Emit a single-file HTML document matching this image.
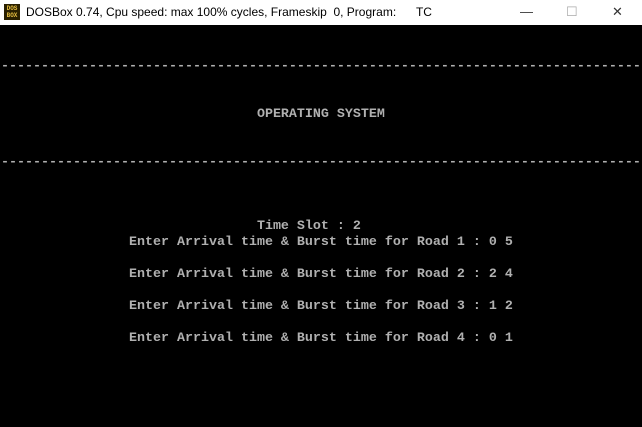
<!DOCTYPE html>
<html><head><style>
body{margin:0;width:642px;height:427px;background:#000;overflow:hidden;position:relative;font-family:"Liberation Sans",sans-serif}
#tb{position:absolute;left:0;top:0;width:642px;height:25px;background:#fff}
#tb .t{position:absolute;left:26px;top:5px;font-size:12px;color:#000;white-space:pre}
#ic{position:absolute;left:4px;top:4px;width:16px;height:16px;background:#2a2000;color:#e8c040;font:bold 6px/7px "Liberation Mono",monospace;text-align:center;box-sizing:border-box;padding-top:1px}
.c{position:absolute;top:4px;font-size:13px;color:#333}
#scr{position:absolute;left:1px;top:27px;width:640px;height:400px}
.r{position:absolute;left:0;height:16px;font:13.33px/16px "Liberation Mono",monospace;color:#b0b0b0;white-space:pre;font-weight:bold;letter-spacing:0}
</style></head><body>
<div id="tb"><div id="ic">DOS<br>BOX</div><div class="t">DOSBox 0.74, Cpu speed: max 100% cycles, Frameskip  0, Program:      TC</div>
<div class="c" style="left:520px">&#8212;</div>
<div class="c" style="left:566px;color:#aaa">&#9744;</div>
<div class="c" style="left:612px">&#10005;</div></div>
<div id="scr">
<div class="r" style="top:32px">--------------------------------------------------------------------------------</div>
<div class="r" style="top:80px">                                OPERATING SYSTEM</div>
<div class="r" style="top:128px">--------------------------------------------------------------------------------</div>
<div class="r" style="top:192px">                                Time Slot : 2</div>
<div class="r" style="top:208px">                Enter Arrival time &amp; Burst time for Road 1 : 0 5</div>
<div class="r" style="top:240px">                Enter Arrival time &amp; Burst time for Road 2 : 2 4</div>
<div class="r" style="top:272px">                Enter Arrival time &amp; Burst time for Road 3 : 1 2</div>
<div class="r" style="top:304px">                Enter Arrival time &amp; Burst time for Road 4 : 0 1</div>
</div>
</body></html>
